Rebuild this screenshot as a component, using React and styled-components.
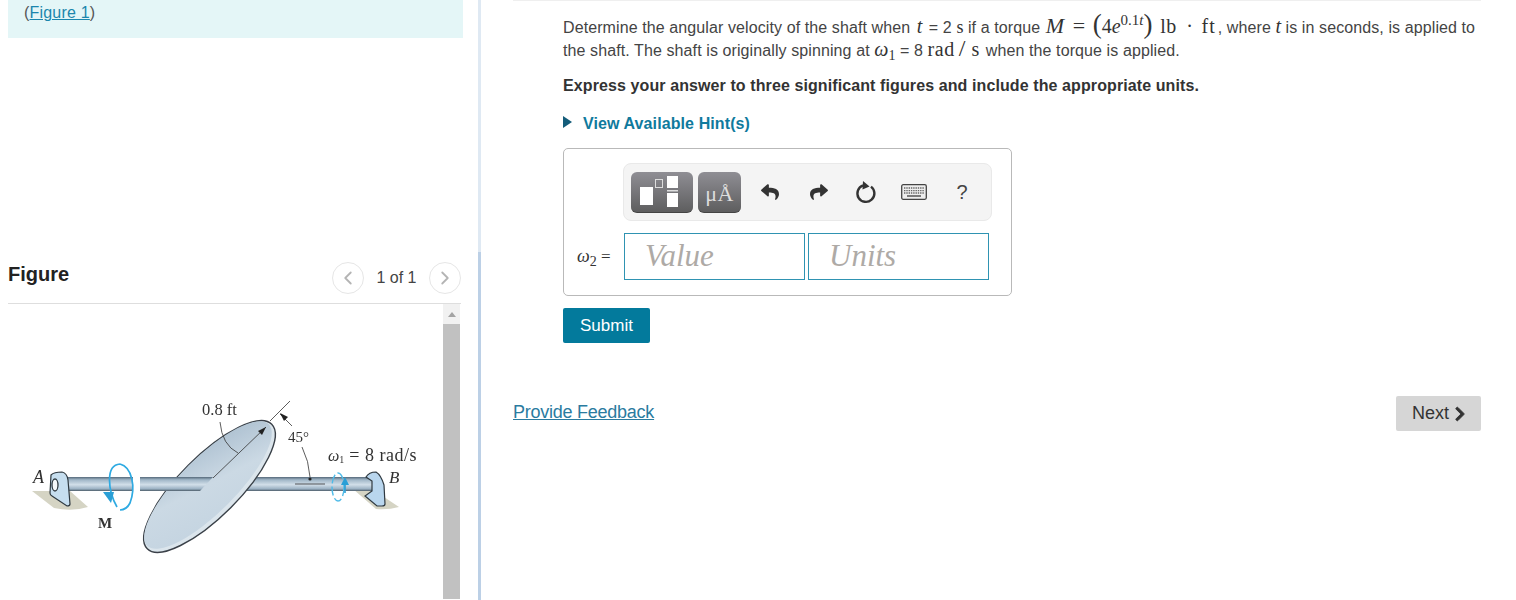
import React from 'react';
import styled, { createGlobalStyle } from 'styled-components';
import { FaReply, FaShare, FaChevronRight } from 'react-icons/fa';
import { ChevronLeft, ChevronRight } from 'lucide-react';

const GlobalStyle = createGlobalStyle`
  html, body {
    margin: 0;
    padding: 0;
    background: #fff;
    overflow: hidden;
  }
  body {
    font-family: "Liberation Sans", Arial, sans-serif;
    font-size: 16px;
    color: #3c3c3c;
  }
`;

const Page = styled.div`
  display: flex;
  width: 1516px;
  height: 600px;
  overflow: hidden;
`;

const LeftPane = styled.div`
  position: relative;
  width: 478px;
  height: 600px;
  padding-left: 8px;
  box-sizing: border-box;
  flex: none;
`;

const Divider = styled.div`
  flex: none;
  width: 3px;
  height: 600px;
  background: linear-gradient(
    to bottom,
    #dfe9f3 0,
    #dfe9f3 252px,
    #bcd0e6 252px,
    #bcd0e6 100%
  );
`;

const Callout = styled.div`
  width: 455px;
  height: 38px;
  padding-left: 16px;
  box-sizing: border-box;
  background: #e4f6f7;
  line-height: 25px;
  letter-spacing: 0.2px;
  color: #555;
`;

const FigureLink = styled.a`
  color: #1b86ad;
  text-decoration: underline;
`;

const FigureHead = styled.div`
  display: flex;
  align-items: flex-end;
  justify-content: space-between;
  width: 453px;
  height: 266px;
  box-sizing: border-box;
  border-bottom: 1px solid #dedede;
`;

const FigureTitle = styled.h2`
  margin: 0 0 17px;
  font-size: 20px;
  line-height: 24px;
  font-weight: bold;
  color: #222;
`;

const Pager = styled.div`
  display: flex;
  align-items: center;
  margin-bottom: 9px;
`;

const PageLabel = styled.span`
  width: 65px;
  text-align: center;
  font-size: 16px;
  color: #444;
`;

const CircleButton = styled.span`
  display: flex;
  align-items: center;
  justify-content: center;
  width: 30px;
  height: 30px;
  border: 1px solid #e6e6e6;
  border-radius: 50%;
  color: #b4b4b4;
`;

const FigureBody = styled.div`
  display: flex;
  width: 453px;
  height: 295px;
`;

const Diagram = styled.svg`
  flex: none;
  display: block;
  width: 435px;
  height: 295px;
`;

const Scrollbar = styled.div`
  display: flex;
  flex-direction: column;
  flex: none;
  width: 17px;
  height: 295px;
  background: #f1f1f1;
`;

const ScrollArrow = styled.div`
  flex: none;
  height: 20px;
  display: flex;
  align-items: center;
  justify-content: center;
  &::before {
    content: '';
    border-left: 4px solid transparent;
    border-right: 4px solid transparent;
    border-bottom: 5px solid #a3a3a3;
  }
`;

const ScrollThumb = styled.div`
  flex: 1;
  background: #c1c1c1;
`;

const RightPane = styled.div`
  flex: none;
  width: 968px;
  margin-left: 32px;
  border-top: 1px solid #efefef;
  height: 599px;
`;

const Problem = styled.div`
  margin: 15px 0 0 50px;
  width: 918px;
`;

const Prose = styled.p`
  margin: 0;
  font-size: 16px;
  line-height: 23px;
  color: #444;
  letter-spacing: 0.1px;
  white-space: nowrap;
`;

const MathRun = styled.span`
  font-family: "Liberation Serif", "DejaVu Serif", serif;
  font-size: ${p => p.$size || 20}px;
  font-style: ${p => (p.$upright ? 'normal' : 'italic')};
  line-height: 0;
  letter-spacing: ${p => p.$track || 0}px;
  color: #333;
  margin: 0 ${p => p.$gap || 0}px;
`;

const MathSub = styled.sub`
  font-size: 14px;
  line-height: 0;
  font-style: normal;
  vertical-align: -4px;
`;

const MathSup = styled.sup`
  font-size: 14px;
  line-height: 0;
  vertical-align: 8px;
`;

const Paren = styled.span`
  font-family: "Liberation Serif", serif;
  font-style: normal;
  font-size: 27px;
  line-height: 0;
  font-weight: 300;
  color: #333;
`;

const Instruction = styled.p`
  margin: 12px 0 0;
  font-size: 16px;
  line-height: 23px;
  font-weight: bold;
  letter-spacing: 0.1px;
  color: #333;
`;

const HintRow = styled.div`
  display: flex;
  align-items: center;
  gap: 11px;
  margin-top: 14px;
  height: 23px;
  padding-top: 1px;
  font-weight: bold;
  letter-spacing: 0.1px;
  color: #0f7a9d;
`;

const HintCaret = styled.span`
  width: 0;
  height: 0;
  margin-top: -4px;
  border-top: 6px solid transparent;
  border-bottom: 6px solid transparent;
  border-left: 9px solid #145c7a;
`;

const AnswerBox = styled.div`
  margin-top: 13px;
  width: 449px;
  height: 148px;
  box-sizing: border-box;
  border: 1px solid #b9b9b9;
  border-radius: 5px;
  padding: 14px 0 0 59px;
`;

const Toolbar = styled.div`
  display: flex;
  align-items: center;
  width: 369px;
  height: 58px;
  box-sizing: border-box;
  padding-left: 7px;
  background: #f4f4f4;
  border: 1px solid #e9e9e9;
  border-radius: 8px;
`;

const GrayButton = styled.div`
  flex: none;
  display: flex;
  align-items: center;
  justify-content: center;
  width: ${p => p.$w}px;
  height: 41px;
  margin-right: 5px;
  box-sizing: border-box;
  border-radius: 6px;
  border-bottom: 1px solid #444;
  background: linear-gradient(to bottom, #8f8e94, #5e5e5f);
`;

const UnitGlyph = styled.span`
  font-family: "Liberation Serif", serif;
  font-size: 22px;
  padding-top: 4px;
  color: #ddd;
  letter-spacing: 0.5px;
`;

const ToolIcon = styled.div`
  flex: none;
  display: flex;
  align-items: center;
  justify-content: center;
  width: ${p => p.$w}px;
  color: #333;
`;

const HelpMark = styled.span`
  font-size: 20px;
  color: #444;
`;

const InputRow = styled.div`
  display: flex;
  align-items: center;
  margin: 12px 0 0 -46px;
`;

const InputLabel = styled.div`
  width: 47px;
  font-family: "Liberation Serif", serif;
  font-size: 17px;
  color: #333;
  white-space: nowrap;
`;

const AnswerInput = styled.input`
  width: 181px;
  height: 47px;
  margin-right: 3px;
  padding: 0 0 2px 20px;
  box-sizing: border-box;
  border: 1px solid #2f93b2;
  border-radius: 0;
  outline: none;
  background: #fff;
  font-family: "Liberation Serif", serif;
  font-style: italic;
  font-size: 31px;
  &::placeholder {
    color: #aeaaa6;
    opacity: 1;
  }
`;

const SubmitButton = styled.button`
  display: block;
  margin-top: 12px;
  width: 87px;
  height: 35px;
  padding: 0;
  border: none;
  border-radius: 2px;
  background: #037a9c;
  color: #fff;
  font-family: "Liberation Sans", Arial, sans-serif;
  font-size: 17px;
`;

const FooterRow = styled.div`
  display: flex;
  align-items: center;
  justify-content: space-between;
  margin-top: 53px;
`;

const FeedbackLink = styled.a`
  font-size: 18px;
  letter-spacing: -0.25px;
  color: #2a7b9f;
  text-decoration: underline;
  margin-top: -3px;
`;

const NextButton = styled.button`
  display: flex;
  align-items: center;
  justify-content: center;
  gap: 3px;
  width: 85px;
  height: 35px;
  padding: 0 0 0 3px;
  border: none;
  border-radius: 2px;
  background: #d6d6d6;
  color: #333;
  font-family: "Liberation Sans", Arial, sans-serif;
  font-size: 18px;
`;

function ShaftFigure() {
  return (
    <Diagram viewBox="8 305 435 295" xmlns="http://www.w3.org/2000/svg">
      <defs>
        <linearGradient id="shaft" x1="0" y1="0" x2="0" y2="1">
          <stop offset="0" stopColor="#56697a" />
          <stop offset="0.2" stopColor="#a0b6c7" />
          <stop offset="0.55" stopColor="#d2dfe9" />
          <stop offset="0.85" stopColor="#9bb1c3" />
          <stop offset="1" stopColor="#4b5c69" />
        </linearGradient>
        <linearGradient id="disc" x1="0" y1="1" x2="1" y2="0">
          <stop offset="0" stopColor="#c3d3e0" />
          <stop offset="0.5" stopColor="#cbd9e4" />
          <stop offset="0.8" stopColor="#b5c7d6" />
          <stop offset="1" stopColor="#a8bccb" />
        </linearGradient>
        <filter id="soft" x="-5%" y="-5%" width="110%" height="110%">
          <feGaussianBlur stdDeviation="0.4" />
        </filter>
      </defs>
      <g filter="url(#soft)">
        <path d="M32 492 L70 492 L88 508 Q72 513 54 509 Z" fill="#d5d4c4" />
        <path d="M353 490 L372 490 L399 508 Q388 511 376 510 Z" fill="#d5d4c4" />

        <rect x="245" y="478" width="130" height="14" fill="url(#shaft)" />

        <ellipse cx="209.5" cy="487.5" rx="88" ry="30" transform="rotate(-45 209.5 487.5)" fill="#dbe5ec" stroke="#3a4148" strokeWidth="1.4" />
        <ellipse cx="208" cy="486" rx="86" ry="27.5" transform="rotate(-45 208 486)" fill="url(#disc)" />

        <path d="M67 478 L133 478 L133 492 L67 492 Z" fill="url(#shaft)" />
        <path d="M140 478 L213 478 L200 492 L140 492 Z" fill="url(#shaft)" />
        <path d="M213 479 L266 428" stroke="#333" strokeWidth="0.8" fill="none" />
        <path d="M266 428 L258 432 L262 436 Z" fill="#222" />

        <path d="M51 476 Q54 473 62 473 Q67 474 68 481 L70 505 Q70 507 67 507 L52 497 Q50 496 50 494 Z" fill="#c6deef" stroke="#2f3940" strokeWidth="1.2" />
        <ellipse cx="55" cy="486" rx="3" ry="6" fill="#f4f8fa" stroke="#2f3940" strokeWidth="1.3" />

        <path d="M366 478 Q369 473 376 473 Q381 476 384 486 L385 505 Q385 507 382 507 L377 507 L365 497 L372 492 L372 482 Z" fill="#b9d6ee" stroke="#2f3940" strokeWidth="1.2" />

        <path d="M120 465 C105 466 108 492 117 508 M120 465 C132 468 136 488 130 504 C127 510 124 511 120 511" stroke="#2eaae2" strokeWidth="1.7" fill="none" />
        <path d="M103 493 L114 493 L111 504 Z" fill="#2a9fd6" />

        <ellipse cx="338" cy="488" rx="6" ry="14" stroke="#4fbbe8" strokeWidth="1.4" fill="none" strokeDasharray="9 3" />
        <path d="M345 478 L349 486 L341 486 Z" fill="#2a9fd6" />
        <path d="M345 486 L345 494" stroke="#2a9fd6" strokeWidth="1.6" />

        <path d="M220 423 Q222 446 238 454" stroke="#333" strokeWidth="0.8" fill="none" />
        <path d="M270 422 L290 402" stroke="#333" strokeWidth="0.8" />
        <path d="M280 415 L292 427" stroke="#333" strokeWidth="0.8" />
        <path d="M280 414 L288 418 L284 422 Z" fill="#222" />
        <path d="M302 448 Q309 462 310 478" stroke="#333" strokeWidth="0.8" fill="none" />
        <path d="M295 485 L325 485" stroke="#333" strokeWidth="0.8" />
        <circle cx="310" cy="480" r="1.6" fill="#222" />

        <g fontFamily="Liberation Serif, serif" fill="#333">
          <text x="202" y="416" fontSize="16.5">0.8 ft</text>
          <text x="288" y="443" fontSize="15">45°</text>
          <text x="328" y="462" fontSize="18"><tspan fontStyle="italic" fontSize="16">ω</tspan><tspan fontSize="10" dy="2">1</tspan><tspan dy="-2" letterSpacing="0.5"> = 8 rad/s</tspan></text>
          <text x="33" y="484" fontSize="18" fontStyle="italic">A</text>
          <text x="389" y="484" fontSize="17" fontStyle="italic">B</text>
          <text x="98" y="529" fontSize="15" fontWeight="bold">M</text>
        </g>
      </g>
    </Diagram>
  );
}

function TemplateGlyph() {
  return (
    <svg width="50" height="32" viewBox="0 0 50 32">
      <rect x="3" y="11" width="13" height="18" fill="#fff" />
      <rect x="18.5" y="3.5" width="7" height="8" fill="none" stroke="#ddd" strokeWidth="1" />
      <rect x="30" y="0" width="11" height="12" fill="#fff" />
      <rect x="30" y="14" width="11" height="1.5" fill="#ddd" />
      <rect x="30" y="17" width="11" height="14" fill="#fff" />
    </svg>
  );
}

function ResetIcon() {
  return (
    <svg width="24" height="24" viewBox="0 0 24 24">
      <path d="M9 5.4 A8.5 8.5 0 1 0 17 6.6" fill="none" stroke="#333" strokeWidth="2.4" />
      <path d="M9 1 L15.5 6.4 L8.5 9.5 Z" fill="#333" />
    </svg>
  );
}

function KeyboardIcon() {
  return (
    <svg width="26" height="16" viewBox="0 0 26 16">
      <rect x="0.7" y="0.7" width="24.6" height="14.6" rx="1.5" fill="#eee" stroke="#444" strokeWidth="1.3" />
      <path d="M3 4 H23 M3 6.6 H23 M3 9 H23" stroke="#666" strokeWidth="1.3" strokeDasharray="1.4 0.9" />
      <path d="M6 12 H20" stroke="#555" strokeWidth="1.5" />
    </svg>
  );
}

function App() {
  return (
    <Page>
      <GlobalStyle />
      <LeftPane>
        <Callout>
          (<FigureLink href="#figure">Figure 1</FigureLink>)
        </Callout>
        <FigureHead>
          <FigureTitle>Figure</FigureTitle>
          <Pager>
            <CircleButton><ChevronLeft size={22} strokeWidth={2} /></CircleButton>
            <PageLabel>1 of 1</PageLabel>
            <CircleButton><ChevronRight size={22} strokeWidth={2} /></CircleButton>
          </Pager>
        </FigureHead>
        <FigureBody>
          <ShaftFigure />
          <Scrollbar>
            <ScrollArrow />
            <ScrollThumb />
          </Scrollbar>
        </FigureBody>
      </LeftPane>
      <Divider />
      <RightPane>
        <Problem>
          <Prose>
            Determine the angular velocity of the shaft when <MathRun $gap={2}>t</MathRun> = 2 <MathRun $upright $size={18}>s</MathRun> if a torque <MathRun $size={22} $gap={1}>M</MathRun> <MathRun $upright $size={22} $gap={3}>=</MathRun> <Paren>(</Paren><MathRun $upright>4</MathRun><MathRun>e</MathRun><MathSup as="sup"><MathRun $size={15} $upright>0.1</MathRun><MathRun $size={15}>t</MathRun></MathSup><Paren>)</Paren> <MathRun $upright $gap={3} $track={0.5}>lb</MathRun> <MathRun $upright $gap={2}>·</MathRun> <MathRun $upright $gap={2} $track={1}>ft</MathRun>, where <MathRun>t</MathRun> is in seconds, is applied to
          </Prose>
          <Prose>
            the shaft. The shaft is originally spinning at <MathRun>ω<MathSub>1</MathSub></MathRun> = 8 <MathRun $upright $track={0.6}>rad</MathRun><MathRun $upright $size={24} $gap={4}>/</MathRun><MathRun $upright $gap={2}>s</MathRun> when the torque is applied.
          </Prose>
          <Instruction>Express your answer to three significant figures and include the appropriate units.</Instruction>
          <HintRow>
            <HintCaret />
            <span>View Available Hint(s)</span>
          </HintRow>
          <AnswerBox>
            <Toolbar>
              <GrayButton $w={62}><TemplateGlyph /></GrayButton>
              <GrayButton $w={43}><UnitGlyph>μÅ</UnitGlyph></GrayButton>
              <ToolIcon $w={47}><FaReply size={18} /></ToolIcon>
              <ToolIcon $w={52}><FaShare size={18} /></ToolIcon>
              <ToolIcon $w={42}><ResetIcon /></ToolIcon>
              <ToolIcon $w={54}><KeyboardIcon /></ToolIcon>
              <ToolIcon $w={42}><HelpMark>?</HelpMark></ToolIcon>
            </Toolbar>
            <InputRow>
              <InputLabel><MathRun $size={18}>ω<MathSub>2</MathSub></MathRun> =</InputLabel>
              <AnswerInput placeholder="Value" readOnly />
              <AnswerInput placeholder="Units" readOnly />
            </InputRow>
          </AnswerBox>
          <SubmitButton>Submit</SubmitButton>
        </Problem>
        <FooterRow>
          <FeedbackLink href="#feedback">Provide Feedback</FeedbackLink>
          <NextButton>Next <FaChevronRight size={16} stroke="currentColor" strokeWidth={30} /></NextButton>
        </FooterRow>
      </RightPane>
    </Page>
  );
}

export default App;
